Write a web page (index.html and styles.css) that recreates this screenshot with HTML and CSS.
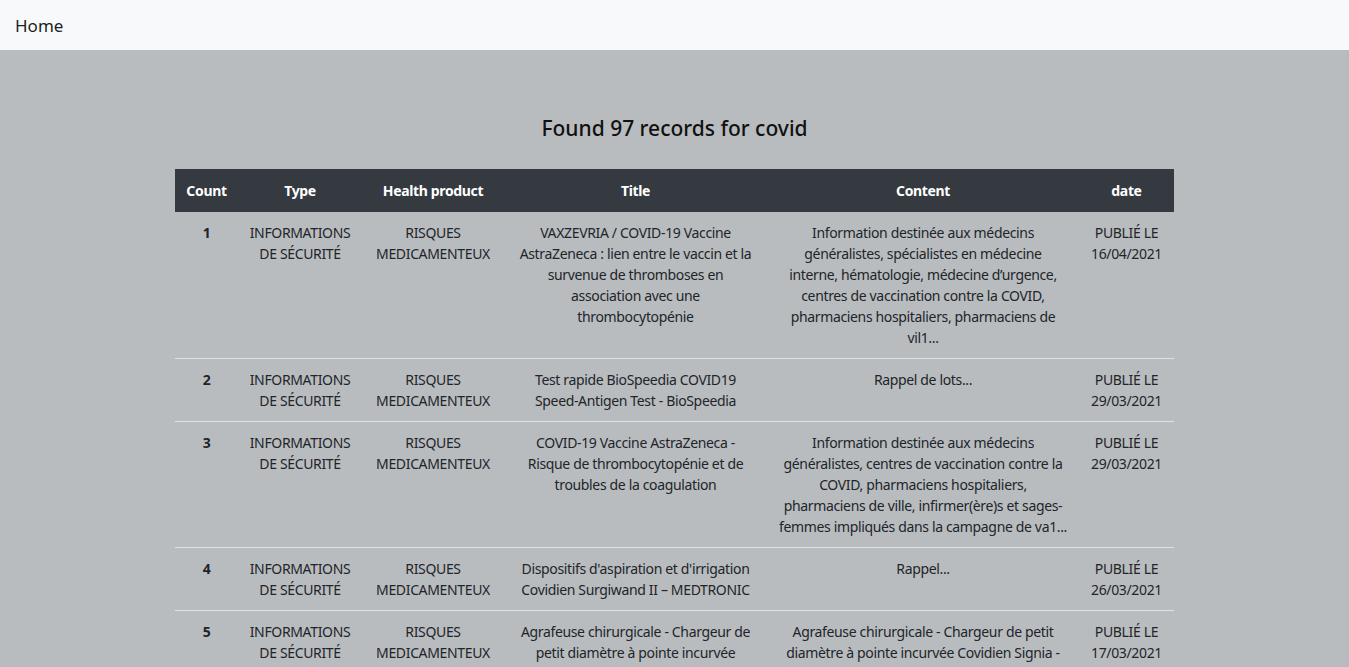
FILE: index.html
```html
<!DOCTYPE html>
<html lang="fr">
<head>
<meta charset="utf-8">
<title>Home</title>
<link rel="stylesheet" href="styles.css">
</head>
<body>
<nav class="navbar"><a class="brand" href="#">Home</a></nav>
<main class="page">
  <h4 class="heading">Found 97 records for covid</h4>
  <table class="results">
    <colgroup>
      <col class="c-count"><col class="c-type"><col class="c-prod"><col class="c-title"><col class="c-content"><col class="c-date">
    </colgroup>
    <thead>
      <tr><th>Count</th><th>Type</th><th>Health product</th><th>Title</th><th>Content</th><th>date</th></tr>
    </thead>
    <tbody>
      <tr>
        <th>1</th><td>INFORMATIONS DE SÉCURITÉ</td><td>RISQUES MEDICAMENTEUX</td>
        <td class="title">VAXZEVRIA / COVID-19 Vaccine AstraZeneca : lien entre le vaccin et la survenue de thromboses en association avec une thrombocytopénie</td>
        <td class="content">Information destinée aux médecins généralistes, spécialistes en médecine interne, hématologie, médecine d’urgence, centres de vaccination contre la COVID, pharmaciens hospitaliers, pharmaciens de vil1...</td>
        <td>PUBLIÉ LE 16/04/2021</td>
      </tr>
      <tr>
        <th>2</th><td>INFORMATIONS DE SÉCURITÉ</td><td>RISQUES MEDICAMENTEUX</td>
        <td class="title">Test rapide BioSpeedia COVID19 Speed-Antigen Test - BioSpeedia</td>
        <td class="content">Rappel de lots...</td>
        <td>PUBLIÉ LE 29/03/2021</td>
      </tr>
      <tr>
        <th>3</th><td>INFORMATIONS DE SÉCURITÉ</td><td>RISQUES MEDICAMENTEUX</td>
        <td class="title">COVID-19 Vaccine AstraZeneca - Risque de thrombocytopénie et de troubles de la coagulation</td>
        <td class="content">Information destinée aux médecins généralistes, centres de vaccination contre la COVID, pharmaciens hospitaliers, pharmaciens de ville, infirmer(ère)s et sages-femmes impliqués dans la campagne de va1...</td>
        <td>PUBLIÉ LE 29/03/2021</td>
      </tr>
      <tr>
        <th>4</th><td>INFORMATIONS DE SÉCURITÉ</td><td>RISQUES MEDICAMENTEUX</td>
        <td class="title">Dispositifs d'aspiration et d'irrigation Covidien Surgiwand II – MEDTRONIC</td>
        <td class="content">Rappel...</td>
        <td>PUBLIÉ LE 26/03/2021</td>
      </tr>
      <tr>
        <th>5</th><td>INFORMATIONS DE SÉCURITÉ</td><td>RISQUES MEDICAMENTEUX</td>
        <td class="title">Agrafeuse chirurgicale - Chargeur de petit diamètre à pointe incurvée Covidien Signia - MEDTRONIC</td>
        <td class="content">Agrafeuse chirurgicale - Chargeur de petit diamètre à pointe incurvée Covidien Signia - Rappel de lots...</td>
        <td>PUBLIÉ LE 17/03/2021</td>
      </tr>
    </tbody>
  </table>
</main>
</body>
</html>
```
FILE: styles.css
```css
html, body {
  margin: 0;
  padding: 0;
}
body {
  background: #b9bcbf;
  font-family: "Noto Sans", "Open Sans", sans-serif;
  color: #212529;
  font-size: 14px;
  line-height: 1.5;
}
.navbar {
  background: #f8f9fa;
  height: 50px;
  display: flex;
  align-items: center;
  padding: 0 15px;
}
.brand {
  color: rgba(0, 0, 0, 0.9);
  text-decoration: none;
  font-size: 17px;
  line-height: 1;
}
.page {
  padding-top: 64px;
  display: flex;
  flex-direction: column;
  align-items: center;
}
.heading {
  margin: 0 0 26px;
  font-size: 21px;
  font-weight: 500;
  line-height: 29px;
  color: #111;
}
.results {
  width: 999px;
  border-collapse: collapse;
  table-layout: fixed;
  letter-spacing: -0.35px;
}
.c-count { width: 63px; }
.c-type { width: 124px; }
.c-prod { width: 142px; }
.c-title { width: 263px; }
.c-content { width: 312px; }
.c-date { width: 95px; }
.results th, .results td {
  padding: 10px;
  text-align: center;
  vertical-align: top;
}
.results td.title {
  padding-left: 12px;
  padding-right: 12px;
}
.results td.content {
  padding-left: 12px;
  padding-right: 12px;
}
.results thead th {
  background: #343a40;
  color: #fff;
  font-weight: 700;
  padding: 11px 10px 9px;
  border-bottom: 2px solid #343a40;
}
.results tbody th, .results tbody td {
  border-top: 1px solid #dee2e6;
}
.results tbody tr:first-child th, .results tbody tr:first-child td {
  border-top: none;
}
.results tbody th {
  font-weight: 700;
}
```
